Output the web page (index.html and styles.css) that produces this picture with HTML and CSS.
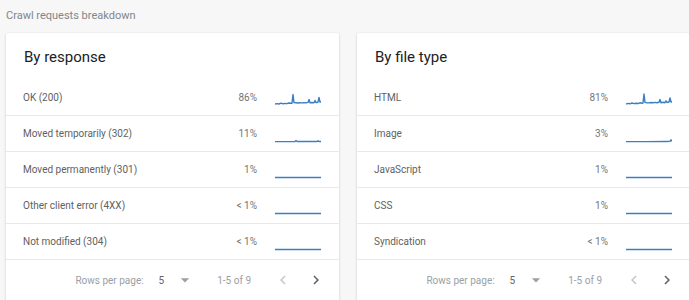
FILE: index.html
```html
<!DOCTYPE html>
<html lang="en">

<head>
    <meta charset="UTF-8" />
    <meta name="viewport" content="width=device-width, initial-scale=1.0" />
    <title>Crawl requests breakdown</title>
    <link rel="stylesheet" href="styles.css">
</head>

<body>
    <div class="page">
        <div class="title">Crawl requests breakdown</div>

        <div class="cards">

            <!-- by response -->
            <div class="card">
                <h2 class="card-heading">By response</h2>
                <div class="row">
                    <span class="label">OK (200)</span>
                    <span class="pct">86%</span>
                    <svg class="spark" viewBox="0 0 46 16"><polyline points="0,13 2,12.6 4,13 6,12.2 8,12.8 10,12.4 12,12.6 14,12 16,12.3 17,12.2 18,3.5 19,11.6 21,11.8 23,12 25,11.7 27,11.9 29,11.6 31,11.9 33,11.4 34,8.5 35,11.8 37,11.5 39,11.8 40,9.5 41,11.6 43,11.2 44,6.5 45,11 46,11"/></svg>
                </div>
                <div class="row">
                    <span class="label">Moved temporarily (302)</span>
                    <span class="pct">11%</span>
                    <svg class="spark" viewBox="0 0 46 16"><polyline points="0,14.6 10,14.6 20,14.5 21,13.6 22,14.5 32,14.5 42,14.5 43,13.8 44,14.5 46,14.5"/></svg>
                </div>
                <div class="row">
                    <span class="label">Moved permanently (301)</span>
                    <span class="pct">1%</span>
                    <svg class="spark" viewBox="0 0 46 16"><polyline points="0,14.5 46,14.5"/></svg>
                </div>
                <div class="row">
                    <span class="label">Other client error (4XX)</span>
                    <span class="pct">&lt; 1%</span>
                    <svg class="spark" viewBox="0 0 46 16"><polyline points="0,14.5 46,14.5"/></svg>
                </div>
                <div class="row">
                    <span class="label">Not modified (304)</span>
                    <span class="pct">&lt; 1%</span>
                    <svg class="spark" viewBox="0 0 46 16"><polyline points="0,14.5 46,14.5"/></svg>
                </div>
                <div class="footer">
                    <span class="rows-label">Rows per page:</span>
                    <span class="rows-value">5</span>
                    <svg class="drop" viewBox="0 0 24 24"><path d="M7 10l5 5 5-5z"/></svg>
                    <span class="range">1-5 of 9</span>
                    <svg class="nav off" viewBox="0 0 24 24"><path d="M15.41 7.41L14 6l-6 6 6 6 1.41-1.41L10.83 12z"/></svg>
                    <svg class="nav" viewBox="0 0 24 24"><path d="M10 6L8.59 7.41 13.17 12l-4.58 4.59L10 18l6-6z"/></svg>
                </div>
            </div>

            <!-- by file type -->
            <div class="card">
                <h2 class="card-heading">By file type</h2>
                <div class="row">
                    <span class="label">HTML</span>
                    <span class="pct">81%</span>
                    <svg class="spark" viewBox="0 0 46 16"><polyline points="0,13 2,12.4 4,12.8 6,12 8,12.6 10,12.2 12,12.5 14,11.8 16,12.2 17,12 18,3 19,11.4 21,11.7 23,11.9 25,11.5 27,11.8 29,11.4 31,11.8 33,11.3 34,8.5 35,11.7 37,11.3 39,11.7 40,9.8 41,11.5 43,11 44,7 45,11 46,10.8"/></svg>
                </div>
                <div class="row">
                    <span class="label">Image</span>
                    <span class="pct">3%</span>
                    <svg class="spark" viewBox="0 0 46 16"><polyline points="0,14.6 20,14.6 40,14.5 44,14.4 45,12.8 46,14.3"/></svg>
                </div>
                <div class="row">
                    <span class="label">JavaScript</span>
                    <span class="pct">1%</span>
                    <svg class="spark" viewBox="0 0 46 16"><polyline points="0,14.5 46,14.5"/></svg>
                </div>
                <div class="row">
                    <span class="label">CSS</span>
                    <span class="pct">1%</span>
                    <svg class="spark" viewBox="0 0 46 16"><polyline points="0,14.5 46,14.5"/></svg>
                </div>
                <div class="row">
                    <span class="label">Syndication</span>
                    <span class="pct">&lt; 1%</span>
                    <svg class="spark" viewBox="0 0 46 16"><polyline points="0,14.5 46,14.5"/></svg>
                </div>
                <div class="footer">
                    <span class="rows-label">Rows per page:</span>
                    <span class="rows-value">5</span>
                    <svg class="drop" viewBox="0 0 24 24"><path d="M7 10l5 5 5-5z"/></svg>
                    <span class="range">1-5 of 9</span>
                    <svg class="nav off" viewBox="0 0 24 24"><path d="M15.41 7.41L14 6l-6 6 6 6 1.41-1.41L10.83 12z"/></svg>
                    <svg class="nav" viewBox="0 0 24 24"><path d="M10 6L8.59 7.41 13.17 12l-4.58 4.59L10 18l6-6z"/></svg>
                </div>
            </div>

        </div>
    </div>
</body>

</html>
```

FILE: styles.css
```css
* {
    margin: 0;
    padding: 0;
    box-sizing: border-box;
}

html,
body {
    background-color: #f7f7f7;
    overflow: hidden;
}

body {
    font-family: Roboto, "Liberation Sans", Arial, sans-serif;
}

.page {
    padding: 8px 0 0 6px;
    width: 720px;
}

.title {
    font-size: 11px;
    line-height: 16px;
    color: #80868b;
    margin-bottom: 9px;
}

.cards {
    display: flex;
    gap: 18px;
}

.card {
    width: 333px;
    background-color: #ffffff;
    border-radius: 2px;
    box-shadow: 0 1px 3px rgba(0, 0, 0, 0.16), 0 0 1px rgba(0, 0, 0, 0.08);
    padding-bottom: 20px;
}

.card-heading {
    font-size: 15px;
    font-weight: 400;
    line-height: 24px;
    color: #202124;
    padding: 12px 18px 0 18px;
    margin-bottom: 11px;
}

/* table rows */

.row {
    display: flex;
    align-items: center;
    height: 36px;
    padding: 0 18px 0 17px;
    border-bottom: 1px solid #e8e8e8;
}

.label {
    flex: 1;
    font-size: 10px;
    color: #616161;
}

.pct {
    font-size: 10px;
    color: #757575;
    text-align: right;
}

.spark {
    width: 46px;
    height: 16px;
    margin-left: 18px;
    margin-top: 2px;
}

.spark polyline {
    fill: none;
    stroke: #3a7fc5;
    stroke-width: 1.4;
    stroke-linejoin: round;
}

/* pager */

.footer {
    display: flex;
    align-items: center;
    justify-content: flex-end;
    height: 40px;
    padding-right: 14px;
    font-size: 10px;
    color: #9aa0a6;
}

.rows-label {
    margin-right: 15px;
}

.rows-value {
    color: #5f6368;
    margin-right: 11px;
}

.drop {
    width: 20px;
    height: 20px;
    fill: #9aa0a6;
    margin-right: 22px;
}

.range {
    margin-right: 23px;
}

.nav {
    width: 18px;
    height: 18px;
    fill: #5f6368;
    margin-left: 15px;
}

.nav.off {
    fill: #c4c7ca;
    margin-left: 0;
}
```
